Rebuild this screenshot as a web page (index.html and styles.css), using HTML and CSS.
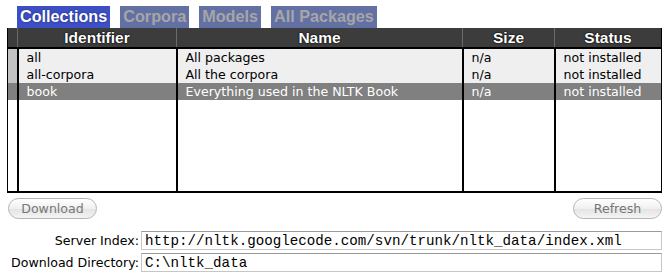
FILE: index.html
```html
<!DOCTYPE html>
<html lang="en">
<head>
    <meta charset="UTF-8">
    <title>NLTK Downloader</title>
    <link rel="stylesheet" href="styles.css">
</head>
<body>
    <div class="tabs">
        <span class="tab active">Collections</span>
        <span class="tab">Corpora</span>
        <span class="tab">Models</span>
        <span class="tab">All Packages</span>
    </div>

    <div class="grid">
        <table>
            <colgroup>
                <col class="c-mark">
                <col class="c-id">
                <col class="c-name">
                <col class="c-size">
                <col class="c-status">
            </colgroup>
            <thead>
                <tr>
                    <th class="mark"></th>
                    <th>Identifier</th>
                    <th>Name</th>
                    <th>Size</th>
                    <th>Status</th>
                </tr>
            </thead>
            <tbody>
                <tr>
                    <td class="mark"></td>
                    <td>all</td>
                    <td>All packages</td>
                    <td>n/a</td>
                    <td>not installed</td>
                </tr>
                <tr>
                    <td class="mark"></td>
                    <td>all-corpora</td>
                    <td>All the corpora</td>
                    <td>n/a</td>
                    <td>not installed</td>
                </tr>
                <tr class="selected">
                    <td class="mark"></td>
                    <td>book</td>
                    <td>Everything used in the NLTK Book</td>
                    <td>n/a</td>
                    <td>not installed</td>
                </tr>
                <tr class="filler">
                    <td class="mark"></td>
                    <td></td>
                    <td></td>
                    <td></td>
                    <td></td>
                </tr>
            </tbody>
        </table>
    </div>

    <div class="buttons">
        <button class="pill">Download</button>
        <button class="pill">Refresh</button>
    </div>

    <div class="fields">
        <label class="field">
            <span class="label">Server Index:</span>
            <input type="text" value="http://nltk.googlecode.com/svn/trunk/nltk_data/index.xml">
        </label>
        <label class="field">
            <span class="label">Download Directory:</span>
            <input type="text" value="C:\nltk_data">
        </label>
    </div>
</body>
</html>
```

FILE: styles.css
```css
body {
    margin: 0;
    background: #ffffff;
    font-family: "DejaVu Sans", sans-serif;
    font-size: 12.6px;
    color: #000;
}
.tabs {
    display: flex;
    gap: 10px;
    padding: 6px 0 0 17px;
    height: 22px;
}
.tab {
    background: #6370a3;
    color: #a6a6a6;
    font-family: "Liberation Sans", Arial, sans-serif;
    font-weight: bold;
    font-size: 16.2px;
    line-height: 21px;
    padding: 0 3px;
}
.tab.active {
    background: #3d4fc4;
    color: #ffffff;
    text-shadow: 0 0 2px #1a2570;
}
.grid {
    margin: 0 6px 0 7px;
    height: 165px;
    border-bottom: 2px solid #000;
    border-right: 1px solid #000;
    box-sizing: border-box;
}
table {
    width: 100%;
    height: 100%;
    border-collapse: collapse;
    table-layout: fixed;
}
.c-mark { width: 10px; }
.c-id { width: 159px; }
.c-name { width: 286px; }
.c-size { width: 92px; }
th {
    background: #3c3c3c;
    color: #fff;
    font-family: "Liberation Sans", Arial, sans-serif;
    font-weight: bold;
    font-size: 15.5px;
    height: 19px;
    padding: 0;
    border-left: 1px solid #6a6a6a;
    border-bottom: 2px solid #000;
    text-shadow: 0 0 2px #000, 0 0 1px #000;
    line-height: 19px;
}
th.mark {
    border-left: 1px solid #000;
}
td {
    height: 17px;
    padding: 0 0 0 8px;
    line-height: 17px;
    background: #efefef;
    border-left: 2px solid #000;
    white-space: nowrap;
    overflow: hidden;
}
td.mark {
    background: #c2c2c2;
    border-left: 1px solid #000;
    padding: 0;
}
tr.selected td {
    background: #808080;
    color: #fff;
}
tr.filler td {
    height: auto;
    background: #fff;
}
.buttons {
    display: flex;
    justify-content: space-between;
    padding: 5px 6px 0 8px;
}
.pill {
    font-family: "DejaVu Sans", sans-serif;
    font-size: 12.6px;
    color: #777;
    height: 21px;
    width: 89px;
    padding: 0;
    border: 1px solid #b5b5b5;
    border-radius: 11px;
    background: linear-gradient(#ffffff, #f0f0f0 50%, #e3e3e3 51%, #f4f4f4);
}
.fields {
    padding: 12px 6px 0 0;
    display: flex;
    flex-direction: column;
    gap: 3px;
}
.field {
    display: flex;
    align-items: center;
}
.label {
    width: 139px;
    text-align: right;
    padding-right: 2px;
    font-size: 12.6px;
}
.field input {
    flex: 1;
    height: 19px;
    box-sizing: border-box;
    border: 1px solid #c6c6c6;
    border-top-color: #9a9a9a;
    padding: 0 3px;
    font-family: "Liberation Mono", "Courier New", monospace;
    font-size: 14.2px;
    color: #000;
    margin: 0;
}
```
